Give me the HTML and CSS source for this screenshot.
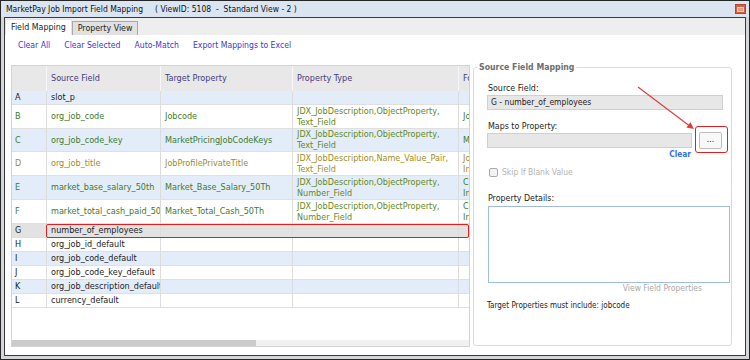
FILE: index.html
```html
<!DOCTYPE html>
<html>
<head>
<meta charset="utf-8">
<link rel="stylesheet" href="styles.css">
</head>
<body>
<div class="window">
  <div class="titlebar">
    <span class="title">MarketPay Job Import Field Mapping</span>
    <span class="viewid">( ViewID: 5108  -  Standard View - 2 )</span>
    <span class="close"><span class="close-box"></span></span>
  </div>
  <div class="frame">
    <div class="tabs">
      <div class="tab active">Field Mapping</div>
      <div class="tab">Property View</div>
    </div>
    <div class="links">
      <span class="link">Clear All</span>
      <span class="link">Clear Selected</span>
      <span class="link">Auto-Match</span>
      <span class="link">Export Mappings to Excel</span>
    </div>
    <div class="main">
      <div class="grid">
        <div class="row ghead">
          <div class="cell"></div>
          <div class="cell">Source Field</div>
          <div class="cell">Target Property</div>
          <div class="cell">Property Type</div>
          <div class="cell">Format</div>
        </div>
        <div class="row alt">
          <div class="cell lab">A</div>
          <div class="cell">slot_p</div>
          <div class="cell"></div>
          <div class="cell"></div>
          <div class="cell"></div>
        </div>
        <div class="row tall g">
          <div class="cell lab">B</div>
          <div class="cell">org_job_code</div>
          <div class="cell">Jobcode</div>
          <div class="cell pt"><span>JDX_JobDescription,ObjectProperty,<br>Text_Field</span></div>
          <div class="cell">Jobcode</div>
        </div>
        <div class="row tall alt g c23">
          <div class="cell lab">C</div>
          <div class="cell">org_job_code_key</div>
          <div class="cell">MarketPricingJobCodeKeys</div>
          <div class="cell pt"><span>JDX_JobDescription,ObjectProperty,<br>Text_Field</span></div>
          <div class="cell">MarketPricing</div>
        </div>
        <div class="row tall y">
          <div class="cell lab">D</div>
          <div class="cell">org_job_title</div>
          <div class="cell">JobProfilePrivateTitle</div>
          <div class="cell"><span>JDX_JobDescription,Name_Value_Pair,<br>Text_Field</span></div>
          <div class="cell"><span>Job Title<br>Internal</span></div>
        </div>
        <div class="row tall alt g">
          <div class="cell lab">E</div>
          <div class="cell">market_base_salary_50th</div>
          <div class="cell">Market_Base_Salary_50Th</div>
          <div class="cell pt"><span>JDX_JobDescription,ObjectProperty,<br>Number_Field</span></div>
          <div class="cell"><span>Currency<br>Integer</span></div>
        </div>
        <div class="row tall g">
          <div class="cell lab">F</div>
          <div class="cell">market_total_cash_paid_50th</div>
          <div class="cell">Market_Total_Cash_50Th</div>
          <div class="cell pt"><span>JDX_JobDescription,ObjectProperty,<br>Number_Field</span></div>
          <div class="cell"><span>Currency<br>Integer</span></div>
        </div>
        <div class="row sel">
          <div class="cell lab">G</div>
          <div class="cell">number_of_employees</div>
          <div class="cell"></div>
          <div class="cell"></div>
          <div class="cell"></div>
        </div>
        <div class="row">
          <div class="cell lab">H</div>
          <div class="cell">org_job_id_default</div>
          <div class="cell"></div>
          <div class="cell"></div>
          <div class="cell"></div>
        </div>
        <div class="row alt">
          <div class="cell lab">I</div>
          <div class="cell">org_job_code_default</div>
          <div class="cell"></div>
          <div class="cell"></div>
          <div class="cell"></div>
        </div>
        <div class="row">
          <div class="cell lab">J</div>
          <div class="cell">org_job_code_key_default</div>
          <div class="cell"></div>
          <div class="cell"></div>
          <div class="cell"></div>
        </div>
        <div class="row alt">
          <div class="cell lab">K</div>
          <div class="cell">org_job_description_default</div>
          <div class="cell"></div>
          <div class="cell"></div>
          <div class="cell"></div>
        </div>
        <div class="row">
          <div class="cell lab">L</div>
          <div class="cell">currency_default</div>
          <div class="cell"></div>
          <div class="cell"></div>
          <div class="cell"></div>
        </div>
        <div class="hscroll"><div class="thumb"></div></div>
      </div>
      <fieldset class="panel">
        <legend class="legend">Source Field Mapping</legend>
        <div class="pbody">
          <div class="lbl first">Source Field:</div>
          <div class="input wide">G - number_of_employees</div>
          <div class="lbl maps">Maps to Property:</div>
          <div class="maprow">
            <div class="input narrow"></div>
            <div class="btnwrap">
              <div class="btn">...</div>
              <div class="highlight"></div>
            </div>
          </div>
          <div class="clear">Clear</div>
          <div class="skip"><span class="chk"></span><span>Skip If Blank Value</span></div>
          <div class="lbl details">Property Details:</div>
          <div class="textarea"></div>
          <div class="viewprops">View Field Properties</div>
          <div class="note">Target Properties must include: jobcode</div>
        </div>
      </fieldset>
    </div>
  </div>
  <svg class="arrow" width="750" height="360" viewBox="0 0 750 360">
    <line x1="638" y1="87" x2="689" y2="125.5" stroke="#e23a3a" stroke-width="1.1"/>
    <polygon points="694,129 686.4,127.4 690.4,122.2" fill="#e23a3a"/>
  </svg>
</div>
</body>
</html>
```

FILE: styles.css
```css
html, body {
  margin: 0;
  padding: 0;
  background: #ffffff;
}

.window {
  position: relative;
  width: 750px;
  height: 360px;
  box-sizing: border-box;
  border: 1px solid #262626;
  background: #d3d6da;
  display: flex;
  flex-direction: column;
  font-family: "DejaVu Sans Condensed", "DejaVu Sans", sans-serif;
  font-size: 8.5px;
  color: #1c1c1c;
}

.titlebar {
  height: 16px;
  flex: none;
  background: #dae5f1;
  display: flex;
  align-items: center;
  padding-left: 5px;
  font-size: 8.5px;
  color: #111;
}

.viewid {
  margin-left: 12px;
  white-space: pre;
}

.close {
  margin-left: auto;
  margin-right: 3px;
  width: 11px;
  height: 10px;
  box-sizing: border-box;
  background: #d85e3e;
  border: 1px solid #b2452e;
  display: flex;
  align-items: center;
  justify-content: center;
}

.close-box {
  width: 5px;
  height: 3px;
  border: 1px solid #f3d2c8;
  background: #e79a86;
}

.frame {
  flex: 1;
  margin: 0 3px 3px 3px;
  border: 1px solid #3a3a3a;
  background: #ffffff;
  display: flex;
  flex-direction: column;
  min-height: 0;
}

.tabs {
  height: 17px;
  flex: none;
  background: #eeeeee;
  display: flex;
  align-items: flex-end;
}

.tab {
  height: 13px;
  line-height: 13px;
  padding: 0 5px;
  border: 1px solid #a9a9a9;
  border-bottom: none;
  background: #e1e1e1;
  color: #1c1c1c;
  font-size: 8.8px;
}

.tab.active {
  height: 15px;
  line-height: 15px;
  background: #ffffff;
  border-color: #e4e4e4;
}

.links {
  height: 30px;
  flex: none;
  box-sizing: border-box;
  padding: 5px 0 0 13px;
  display: flex;
  gap: 14px;
  line-height: 11px;
  color: #3b38d4;
  font-size: 8.6px;
}

.main {
  flex: 1;
  display: flex;
  gap: 3px;
  padding-left: 6px;
  min-height: 0;
}

/* grid */
.grid {
  width: 459px;
  height: 282px;
  box-sizing: border-box;
  border: 1px solid #d3d3d3;
  overflow: hidden;
  display: flex;
  flex-direction: column;
  flex: none;
  font-size: 9px;
}

.row {
  position: relative;
  display: grid;
  grid-template-columns: 34px 114px 132px 166px 80px;
  height: 14px;
  box-sizing: border-box;
  border-bottom: 1px solid #dfdfdf;
  background: #ffffff;
  line-height: 11px;
  flex: none;
}

.row.tall { height: 24px; }
.row.tall.c23 { height: 23px; }
.row.alt { background: #e3edf9; }
.row.sel { background: #e2e2e2; }

.row.sel::after {
  content: "";
  position: absolute;
  left: 34px;
  right: 0;
  top: 0;
  bottom: -1px;
  border: 1.5px solid #e01f1f;
  border-radius: 2px;
}

.cell {
  display: flex;
  align-items: center;
  overflow: hidden;
  white-space: nowrap;
  padding-left: 4px;
  border-left: 1px solid #dcdcdc;
}

.cell.lab {
  border-left: none;
  padding-left: 3px;
}

.ghead {
  height: 25px;
  background: #e8e8e8;
  border-bottom: none;
  color: #463b80;
  font-size: 9px;
}

.ghead .cell {
  border-left: 1px solid #f7f7f7;
}

.ghead .cell:first-child {
  border-left: none;
}

.g { color: #3b7b2c; }
.g .pt { color: #64891a; }
.y { color: #a08c1c; }

.hscroll {
  margin-top: auto;
  height: 6px;
  background: #f1f1f1;
  flex: none;
}

.thumb {
  width: 244px;
  height: 6px;
  background: #cbcbcb;
}

/* right panel */
.panel {
  box-sizing: border-box;
  width: 259px;
  height: 285px;
  margin: -4px 0 0 0;
  padding: 0;
  border: 1px solid #dadada;
  border-radius: 3px;
  min-width: 0;
  flex: none;
}

.legend {
  margin-left: 3px;
  padding: 0 2px;
  font-weight: bold;
  color: #6e6e6e;
  font-size: 8.7px;
  line-height: 12px;
}

.pbody {
  padding-left: 13px;
  display: flex;
  flex-direction: column;
  align-items: flex-start;
}

.lbl {
  line-height: 12px;
  padding-left: 1px;
  color: #1c1c1c;
  font-size: 8.8px;
}

.lbl.first { margin-top: 9px; }
.lbl.maps { margin-top: 10px; }
.lbl.details { margin-top: 15px; }

.input {
  box-sizing: border-box;
  height: 15px;
  line-height: 13px;
  border: 1px solid #d0d0d0;
  background: #e7e7e7;
  padding-left: 3px;
  color: #1c1c1c;
}

.input.wide {
  width: 236px;
  margin-top: 1px;
}

.maprow {
  display: flex;
  align-items: center;
  height: 17px;
}

.input.narrow { width: 205px; }

.btnwrap {
  position: relative;
  margin-left: 7px;
}

.btn {
  box-sizing: border-box;
  width: 23px;
  height: 17px;
  border: 1px solid #bdbdbd;
  border-radius: 2px;
  background: #f8f8f8;
  text-align: center;
  line-height: 13px;
  color: #222;
}

.highlight {
  position: absolute;
  left: -4px;
  top: -6px;
  width: 33px;
  height: 27px;
  box-sizing: border-box;
  border: 1.5px solid #e01f1f;
  border-radius: 3px;
}

.clear {
  width: 204px;
  text-align: right;
  line-height: 10px;
  height: 10px;
  color: #3a6fe3;
  font-weight: bold;
  font-size: 8.3px;
}

.skip {
  margin-top: 8px;
  display: flex;
  align-items: center;
  height: 10px;
  color: #b3b3b3;
}

.chk {
  width: 9px;
  height: 9px;
  box-sizing: border-box;
  border: 1px solid #a9a9a9;
  border-radius: 2px;
  background: #f3f3f3;
  margin: 0 4px 0 2px;
}

.textarea {
  margin-top: 2px;
  margin-left: 1px;
  width: 242px;
  height: 77px;
  box-sizing: border-box;
  border: 1px solid #9fbbe0;
  background: #ffffff;
}

.viewprops {
  width: 215px;
  text-align: right;
  line-height: 11px;
  color: #a9a9a9;
}

.note {
  margin-top: 6px;
  line-height: 12px;
  font-size: 8px;
  color: #1c1c1c;
}

.arrow {
  position: absolute;
  left: -1px;
  top: -1px;
  pointer-events: none;
}
```
